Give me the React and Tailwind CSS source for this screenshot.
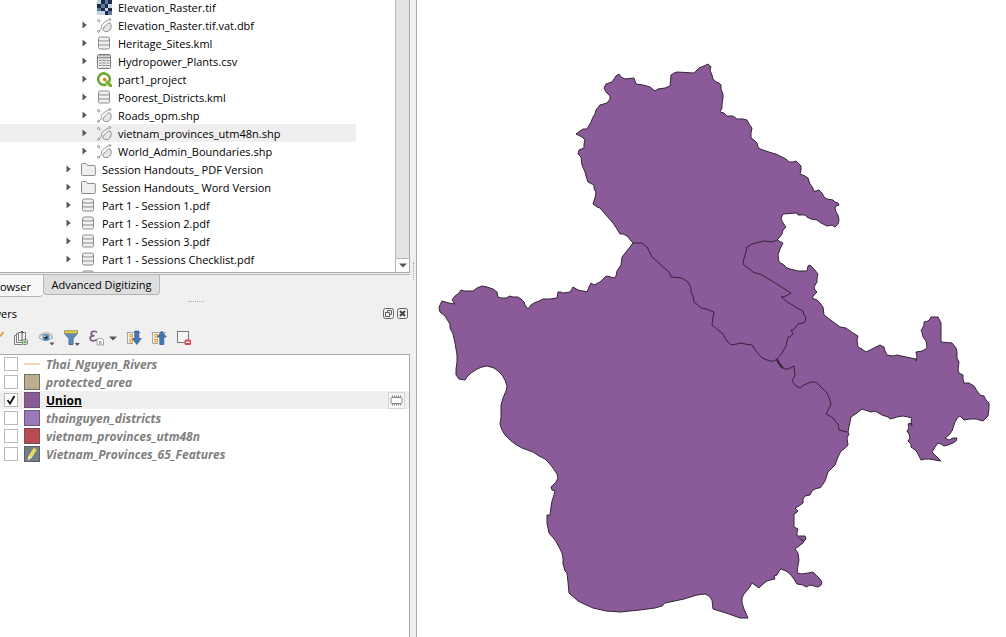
import React from 'react';

/* ---------- browser icons ---------- */

function RasterIcon() {
  const dark = [[4, 0], [12, 0], [0, 4], [8, 4], [4, 8], [12, 8], [8, 12]];
  const mid = [[8, 0], [4, 4], [0, 8], [12, 12]];
  return (
    <svg viewBox="0 0 16 16" className="size-[15px] shrink-0" shapeRendering="crispEdges" aria-hidden="true">
      <rect width="16" height="16" fill="#c3d3e6" />
      {dark.map(([x, y]) => <rect key={`${x}-${y}`} x={x} y={y} width="4" height="4" fill="#1d2b45" />)}
      {mid.map(([x, y]) => <rect key={`${x}-${y}`} x={x} y={y} width="4" height="4" fill="#5b7ba5" />)}
    </svg>
  );
}

function VectorIcon() {
  return (
    <svg viewBox="0 0 15 15" className="size-[15px] shrink-0" fill="none" stroke="#8f8f8f" aria-hidden="true">
      <path d="M2 13C5.500 11.500 3.500 7.500 6 5.500S9 3.500 11.500 1.800" />
      <path d="M2 3L5 3.500M2 3L3 6" stroke="#bbb" strokeDasharray="1.500 1" />
      <circle cx="1.500" cy="2.500" r="1" fill="#fff" />
      <circle cx="1.500" cy="13.300" r="1" fill="#fff" />
      <circle cx="12.800" cy="1.500" r="1" fill="#fff" />
      <path d="M6 11.500C6 9 7.800 8.800 9 7.500S11.500 4 13 5s1.500 4 .5 6-3 2.800-5 2.500S6 12.500 6 11.500Z" fill="#e6e6e6" />
    </svg>
  );
}

function DatabaseIcon() {
  return (
    <svg viewBox="0 0 15 15" className="size-[15px] shrink-0" fill="#f1f1f1" stroke="#8b8b8b" aria-hidden="true">
      <path d="M1.500 3v8.500q0 1.500 1.500 1.500h8q1.500 0 1.500-1.500V3" />
      <rect x="1.500" y="1" width="11" height="4" rx="2" />
      <path d="M1.500 7.500q0 1.500 1.500 1.500h8q1.500 0 1.500-1.500" fill="none" />
    </svg>
  );
}

function TableIcon() {
  return (
    <svg viewBox="0 0 15 15" className="size-[15px] shrink-0" aria-hidden="true">
      <rect x=".5" y=".5" width="13" height="14" rx="1" fill="#f4f4f4" stroke="#777" />
      <path d="M1 3h12v1.500H1z" fill="#999" />
      <path d="M2 6.500h2.500M6 6.500h2.500M10 6.500h2.500M2 9h2.500M6 9h2.500M10 9h2.500M2 11.500h2.500M6 11.500h2.500M10 11.500h2.500M2 1.800h2.500M6 1.800h2.500M10 1.800h2.500" stroke="#7c7c7c" />
      <path d="M5.200 1v13M9.200 1v13" stroke="#aaa" strokeWidth=".6" />
    </svg>
  );
}

function ProjectIcon() {
  return (
    <svg viewBox="0 0 15 15" className="size-[15px] shrink-0" aria-hidden="true">
      <path d="M12.300 9.500A5.800 5.800 0 1 0 9.300 12.500" fill="none" stroke="#6aa632" strokeWidth="2.600" />
      <path d="M8.500 8.500L11 8.500L15 12.500V15H12.500L8.500 11Z" fill="#7fae2c" />
      <circle cx="7.600" cy="7.600" r="1.800" fill="#ee7913" />
    </svg>
  );
}

function FolderIcon() {
  return (
    <svg viewBox="0 0 15 15" className="size-[15px] shrink-0" aria-hidden="true">
      <path d="M.5 3Q.5 1.500 1.500 1.500h3.500l1.500 2h7q.8 0 .8.800v8.400q0 .8-.8.800H1.300q-.8 0-.8-.8Z" fill="#efefef" stroke="#8c8c8c" />
    </svg>
  );
}

const icons = {
  raster: RasterIcon,
  vector: VectorIcon,
  database: DatabaseIcon,
  table: TableIcon,
  project: ProjectIcon,
  folder: FolderIcon,
};

const files = [
  { name: 'Elevation_Raster.tif', icon: 'raster', nested: true, leaf: true },
  { name: 'Elevation_Raster.tif.vat.dbf', icon: 'vector', nested: true },
  { name: 'Heritage_Sites.kml', icon: 'database', nested: true },
  { name: 'Hydropower_Plants.csv', icon: 'table', nested: true },
  { name: 'part1_project', icon: 'project', nested: true },
  { name: 'Poorest_Districts.kml', icon: 'database', nested: true },
  { name: 'Roads_opm.shp', icon: 'vector', nested: true },
  { name: 'vietnam_provinces_utm48n.shp', icon: 'vector', nested: true, selected: true },
  { name: 'World_Admin_Boundaries.shp', icon: 'vector', nested: true },
  { name: 'Session Handouts_ PDF Version', icon: 'folder' },
  { name: 'Session Handouts_ Word Version', icon: 'folder' },
  { name: 'Part 1 - Session 1.pdf', icon: 'database' },
  { name: 'Part 1 - Session 2.pdf', icon: 'database' },
  { name: 'Part 1 - Session 3.pdf', icon: 'database' },
  { name: 'Part 1 - Sessions Checklist.pdf', icon: 'database' },
];

function FileRow({ file }) {
  const Icon = icons[file.icon];
  return (
    <li
      className={`flex h-[18px] items-center gap-[6px] whitespace-nowrap ${file.nested ? 'pl-[79px]' : 'pl-[63px]'} ${
        file.selected ? 'bg-[#efefef]' : ''
      }`}
    >
      {file.leaf ? (
        <span className="w-3 shrink-0" />
      ) : (
        <button type="button" aria-label={`Expand ${file.name}`} className="flex w-3 shrink-0 pl-[3px]">
          <svg viewBox="0 0 5 8" className="h-2 w-[5px]" aria-hidden="true">
            <path d="M.5 .5L4.800 4L.5 7.500Z" fill="#5a5a5a" />
          </svg>
        </button>
      )}
      <Icon />
      <span className="pt-0.5">{file.name}</span>
    </li>
  );
}

function BrowserTree() {
  return (
    <section aria-label="Browser" className="mr-[6px] flex h-[273px] border-r border-b border-[#a9a9a9] bg-white">
      <div className="min-w-0 flex-1 overflow-hidden">
        <ul className="-mt-0.5 mr-[39px]">
          {files.map((file) => <FileRow key={file.name} file={file} />)}
          <li className="flex h-[18px] items-center pl-[81px]"><DatabaseIcon /></li>
        </ul>
      </div>
      <div className="flex w-[14px] flex-col border-l border-[#b8b8b8] bg-[#e3e3e3]">
        <div className="flex-1" />
        <button type="button" aria-label="Scroll down" className="flex h-[14px] items-center justify-center border-t border-[#b8b8b8] bg-white">
          <svg viewBox="0 0 8 5" className="h-[5px] w-2" aria-hidden="true"><path d="M0 .5h8L4 4.500Z" fill="#555" /></svg>
        </button>
      </div>
    </section>
  );
}

/* ---------- layers toolbar ---------- */

function AddGroupIcon() {
  return (
    <svg viewBox="0 0 16 16" className="size-4" fill="none" stroke="#7d7d7d" aria-hidden="true">
      <path d="M3.500 5.500h-2v9h8M5.500 3.500h-2v9h6" />
      <path d="M5.500 2.500h7v8h-7Z" fill="#f7f7f7" />
      <path d="M9 10V1M7 3l2-2 2 2" stroke="#555" />
      <rect x="9.500" y="9.500" width="5" height="5" rx="1.500" fill="#e8f4e4" stroke="#6b9a60" />
      <path d="M12 10.500v3M10.500 12h3" stroke="#55894b" />
    </svg>
  );
}

function EyeIcon() {
  return (
    <svg viewBox="0 0 17 16" className="h-4 w-[17px]" aria-hidden="true">
      <path d="M.8 7.500Q7 .8 15 7.500Q7.500 13 .8 7.500Z" fill="#fafafa" stroke="#999" />
      <path d="M1 5.500Q8 0 15 5.500" fill="none" stroke="#aaa" />
      <circle cx="8" cy="7.500" r="3.600" fill="#5b8fbd" />
      <circle cx="8" cy="7.500" r="1.700" fill="#17324d" />
      <circle cx="7" cy="6.300" r=".8" fill="#fff" />
      <path d="M11.500 12.500h5l-2.500 3Z" fill="#555" />
    </svg>
  );
}

function FilterIcon() {
  return (
    <svg viewBox="0 0 16 16" className="size-4" aria-hidden="true">
      <path d="M.5 1h13v2.500L9 8.500v6H5v-6L.5 3.500Z" fill="#6089b8" stroke="#44699a" />
      <path d="M.5 .8h13v2.400H.5Z" fill="#f2d94c" stroke="#a8983c" strokeWidth=".7" />
      <path d="M10.800 13h5l-2.500 3Z" fill="#555" />
    </svg>
  );
}

function ExpressionIcon() {
  return (
    <svg viewBox="0 0 16 16" className="size-4" fill="none" aria-hidden="true">
      <path d="M8 2.500C6.500.5 2 1 2.200 3.700c.1 1.500 1.700 2 3.300 2C3 5.700 1.200 6.500 1.200 8.300 1.200 11.300 6 11.600 8 9.300" stroke="#7a5a7e" strokeWidth="1.700" />
      <path d="M8 15v-4.500q0-2 2-2h2.500q2 0 2 2V15h-2.500v-3.500h-1.500V15Z" fill="#fff" stroke="#a0a0a0" />
    </svg>
  );
}

function TreeArrowIcon({ up }) {
  return (
    <svg viewBox="0 0 16 16" className="size-4" aria-hidden="true">
      <path d="M1.500 2v11.500M.5 2.500H15M1.500 13.500H7" stroke="#a5a5a5" fill="none" />
      <rect x="4" y="4.500" width="2.500" height="2.500" fill="#fff4dc" stroke="#e59a28" />
      <rect x="4" y="9.500" width="2.500" height="2.500" fill="#fff4dc" stroke="#e59a28" />
      {up ? (
        <path d="M8.800 14.500V7H6.500L10.800 1 15.200 7H12.800v7.500Z" fill="#4578b5" stroke="#28558c" strokeWidth=".7" />
      ) : (
        <path d="M8.800 1v7.500H6.500l4.300 6 4.400-6H12.800V1Z" fill="#4578b5" stroke="#28558c" strokeWidth=".7" />
      )}
    </svg>
  );
}

function RemoveIcon() {
  return (
    <svg viewBox="0 0 16 16" className="size-4" aria-hidden="true">
      <rect x="1.500" y="1.500" width="11" height="11" fill="#f7f7f7" stroke="#7a7a7a" />
      <rect x="8.500" y="9.500" width="6.500" height="5.500" rx="1.500" fill="#e0434e" />
      <path d="M9.800 12.300h4" stroke="#fff" strokeWidth="1.300" />
    </svg>
  );
}

function ToolButton({ label, children }) {
  return (
    <button type="button" aria-label={label} className="flex h-4 items-center">
      {children}
    </button>
  );
}

function LayersToolbar() {
  return (
    <div role="toolbar" aria-label="Layer tools" className="flex h-[32px] items-center gap-[9px]">
      <ToolButton label="Layer styling">
        <svg viewBox="0 0 4 16" className="h-4 w-1" aria-hidden="true">
          <path d="M0 6.500L3.500 2" stroke="#e09a3a" strokeWidth="1.800" />
        </svg>
      </ToolButton>
      <ToolButton label="Add group"><AddGroupIcon /></ToolButton>
      <ToolButton label="Manage map themes"><EyeIcon /></ToolButton>
      <ToolButton label="Filter legend"><FilterIcon /></ToolButton>
      <ToolButton label="Filter by expression">
        <span className="flex items-center gap-1">
          <ExpressionIcon />
          <svg viewBox="0 0 8 5" className="h-[5px] w-2" aria-hidden="true"><path d="M0 .5h8L4 4.500Z" fill="#555" /></svg>
        </span>
      </ToolButton>
      <ToolButton label="Expand all"><TreeArrowIcon /></ToolButton>
      <ToolButton label="Collapse all"><TreeArrowIcon up /></ToolButton>
      <ToolButton label="Remove layer"><RemoveIcon /></ToolButton>
    </div>
  );
}

/* ---------- layers ---------- */

const layers = [
  { name: 'Thai_Nguyen_Rivers', line: true },
  { name: 'protected_area', swatch: 'bg-[#bdae90]' },
  { name: 'Union', swatch: 'bg-[#8b5a98]', active: true },
  { name: 'thainguyen_districts', swatch: 'bg-[#9a7ab8]' },
  { name: 'vietnam_provinces_utm48n', swatch: 'bg-[#b94a4e]' },
  { name: 'Vietnam_Provinces_65_Features', swatch: 'bg-[#718087]', editing: true },
];

function LayerRow({ layer }) {
  return (
    <li className={`flex h-[18px] items-center pr-1 pl-1 ${layer.active ? 'bg-[#efefef]' : ''}`}>
      <label className="flex flex-1 items-center whitespace-nowrap">
        <span className="relative mr-[6px] flex">
          <input
            type="checkbox"
            defaultChecked={layer.active}
            className="peer size-[14px] appearance-none border border-[#b9b9b9] bg-white"
          />
          <svg viewBox="0 0 14 14" className="pointer-events-none absolute inset-0 hidden size-[14px] peer-checked:block" aria-hidden="true">
            <path d="M3.500 7L6 10.500L10.500 3" fill="none" stroke="#111" strokeWidth="1.800" />
          </svg>
        </span>
        {layer.line ? (
          <span className="mr-[6px] flex h-4 w-4 items-center"><span className="h-0.5 w-full bg-[#efdcae]" /></span>
        ) : (
          <span className={`mr-[6px] size-4 border border-[#55505a]/70 ${layer.swatch}`}>
            {layer.editing && (
              <svg viewBox="0 0 14 14" className="size-[14px]" aria-hidden="true">
                <path d="M3 13L4 9L9 1L11.500 2.500L6.500 10.500Z" fill="#f1dc3e" stroke="#f6f0b8" strokeWidth=".6" />
                <path d="M3 13L4 9L6.500 10.500Z" fill="#f7eed2" />
                <path d="M9 1L11.500 2.500" stroke="#b9a53a" />
              </svg>
            )}
          </span>
        )}
        <span className={`pt-0.5 text-[12px] leading-4 font-bold ${layer.active ? 'text-black underline' : 'text-[#808080] italic'}`}>
          {layer.name}
        </span>
      </label>
      {layer.active && (
        <button type="button" aria-label="Temporary scratch layer" className="flex size-[17px] items-center justify-center border border-[#d5d5d5] bg-[#f6f6f6]">
          <svg viewBox="0 0 13 11" className="h-[11px] w-[13px]" fill="none" stroke="#858585" aria-hidden="true">
            <rect x="1" y="2.500" width="11" height="6" rx="1" fill="#fff" />
            <path d="M2.500 .5v2M4.500 .5v2M6.500 .5v2M8.500 .5v2M10.500 .5v2M2.500 8.500v2M4.500 8.500v2M6.500 8.500v2M8.500 8.500v2M10.500 8.500v2" />
          </svg>
        </button>
      )}
    </li>
  );
}

function LayersPanel() {
  return (
    <section aria-label="Layers" className="flex min-h-0 flex-1 flex-col">
      <div className="mr-[8px] flex h-[18px] items-center justify-between">
        <h2 className="flex w-[17px] justify-end overflow-hidden pt-0.5">Layers</h2>
        <div className="flex gap-[3px]">
          <button type="button" aria-label="Float panel">
            <svg viewBox="0 0 11 11" className="size-[11px]" fill="none" stroke="#666" aria-hidden="true">
              <rect x=".5" y=".5" width="10" height="10" rx="2" />
              <path d="M4.500 4.500v-2h4v4h-2" />
              <rect x="2.500" y="4.500" width="4" height="4" />
            </svg>
          </button>
          <button type="button" aria-label="Close panel">
            <svg viewBox="0 0 11 11" className="size-[11px]" fill="none" stroke="#666" aria-hidden="true">
              <rect x=".5" y=".5" width="10" height="10" rx="2" />
              <path d="M3 3l5 5M8 3L3 8" stroke="#444" strokeWidth="2" />
            </svg>
          </button>
        </div>
      </div>
      <LayersToolbar />
      <ul className="mr-[6px] flex-1 border-t border-r border-[#a9a9a9] bg-white">
        {layers.map((layer) => <LayerRow key={layer.name} layer={layer} />)}
      </ul>
    </section>
  );
}

/* ---------- map ---------- */

const outline =
  'M708 64L711 67L710 70L712 75L713 79L716 82L719 83L721 85L721 89L723 94L723 98L722 104L722 108L720 112L724 113L727 116L733 116L737 119L743 119L747 120L749 124L752 128L751 133L751 138L754 140L757 143L758 147L760 149L766 151L772 153L776 154L780 156L784 158L786 159L789 162L793 162L796 161L798 163L801 166L801 170L800 174L805 176L808 178L810 184L813 188L813 191L816 191L819 190L822 193L824 197L827 199L833 200L835 202L838 203L839 205L836 206L835 208L836 212L838 215L839 220L838 224L835 227L832 225L827 226L821 223L817 220L811 219L807 217L805 215L798 215L797 213L783 214L782 216L781 219L783 223L786 227L783 230L782 234L779 238L777 240L783 243L780 249L778 255L779 262L784 265L787 268L790 269L798 271L807 271L808 266L810 265L814 269L818 274L817 278L817 282L814 287L815 290L817 292L814 295L812 298L817 300L820 303L823 307L824 315L832 321L840 327L846 328L853 333L858 336L857 340L858 347L862 349L866 352L870 350L880 345L884 347L885 351L887 355L893 356L897 355L906 357L916 359L916 361L917 357L916 352L922 351L926 349L927 347L926 341L923 337L922 332L921 331L924 325L924 322L928 321L930 319L931 317L938 317L941 323L941 330L941 342L952 343L956 348L957 352L957 358L959 362L958 370L959 373L963 375L963 379L964 383L969 383L974 386L977 391L980 395L984 396L986 400L989 403L989 408L988 416L983 421L976 419L970 419L964 420L960 416L958 417L955 422L952 431L949 435L945 438L949 440L953 438L957 438L956 441L953 443L948 445L944 446L941 444L938 443L935 447L932 452L937 457L941 461L935 460L929 459L925 459L921 460L919 456L917 452L915 450L911 447L911 444L908 441L910 438L909 434L907 431L909 428L908 424L910 423L912 426L911 421L912 418L908 417L903 416L897 417L894 418L890 419L888 417L882 415L875 411L871 412L862 409L857 413L851 417L850 422L849 427L848 432L849 434L847 438L848 445L844 449L841 451L838 457L835 465L831 469L828 472L825 481L823 484L820 488L818 488L815 489L812 491L810 495L805 496L803 499L803 503L799 506L795 508L798 511L796 513L794 514L794 520L794 527L798 529L797 532L797 536L801 536L805 536L806 539L804 541L803 543L799 546L795 549L798 553L799 560L798 565L797 573L802 574L808 573L813 572L816 575L819 578L822 582L821 585L818 587L814 586L810 585L806 587L803 585L797 584L794 579L790 574L786 571L781 569L779 571L777 575L774 576L775 579L770 580L767 581L763 584L759 588L752 583L749 588L744 594L742 598L742 603L744 609L748 618L740 618L726 613L713 609L712 600L709 596L705 594L697 595L684 599L665 603L662 606L655 608L640 610L620 612L606 611L593 608L584 604L578 601L569 593L568 582L567 573L565 571L564 567L563 564L563 558L562 553L559 547L555 540L549 533L547 523L547 515H550L551 507L552 501L554 495L555 491L552 490L551 487L553 485L556 482L558 478L557 474L553 468L549 463L545 459L539 456L533 452L522 448L515 444L510 440L505 435L502 430L500 424L501 418L501 405L503 398L506 391L507 386L505 380L502 375L498 371L494 368L487 366L482 367L477 369L471 373L467 377L465 380L459 379L456 375L456 369L457 362L457 355L455 343L453 334L450 328L450 324L448 321L445 316L440 312L439 308L440 305L442 301L449 303L455 304L452 300L455 296L459 293L461 290L464 291L473 291L477 288L482 286L487 287L493 289L497 292L498 297L501 298L506 298L510 296L513 297L518 297L521 299L524 302L525 305L528 309L531 305L534 303L539 301L543 299L550 299L557 298L558 292L561 292L563 293L570 292L572 289L573 287L578 290L583 291L587 292L589 287L591 283L594 285L600 282L602 280L605 277L607 276L614 278L616 276L617 271L621 265L622 257L626 252L630 247L633 243L627 236L623 234L620 234L617 229L613 223L606 215L600 208L597 207L593 204L595 198L596 193L594 188L594 185L588 182L586 176L585 172L582 165L581 157L578 154L579 150L584 148L584 144L585 140L582 137L576 134L580 131L583 129L587 129L591 122L593 117L595 114L596 110L600 105L607 103L610 99L610 96L606 92L604 88L606 84L612 82L616 76L619 74L621 77L625 79L634 78L636 84L643 85L650 87L655 91L658 89L665 88L670 86L671 75L674 73L677 72L694 73L699 68L704 66Z';

const southBorder =
  'M633 243L642 243L647 247L652 257L660 264L669 272L671 277L682 278L688 282L691 288L691 292L693 296L694 302L699 306L701 308L706 309L714 312L713 317L712 325L718 330L723 334L726 340L731 345L742 343L745 344L752 345L756 351L762 358L770 361L774 361L777 359L780 364L784 369L788 369L794 366L795 375L792 381L796 386L800 388L804 385L811 382L816 382L821 387L827 393L830 400L831 405L828 410L826 414L830 416L833 418L836 422L838 424L839 430L847 432';

const eastBorder =
  'M777 240L772 242L764 241L752 244L747 247L746 252L744 258L743 264L753 272L762 275L772 281L783 288L791 293L786 296L781 297L789 303L797 308L803 311L804 315L806 317L805 322L803 323L798 324L795 328L793 330L791 330L793 334L790 337L788 337L786 346L782 353L777 359';

function MapCanvas() {
  return (
    <main className="min-w-0 flex-1 bg-white">
      <svg viewBox="417 0 589 637" className="size-full" role="img" aria-label="Union layer map">
        <g stroke="#352539" strokeWidth="1" strokeLinejoin="round">
          <path d={outline} fill="#8b5a98" />
          <path d={southBorder} fill="none" />
          <path d={eastBorder} fill="none" />
          <path d="M777 360L780 365L783 368" fill="none" strokeWidth="2" />
          <path d="M799 538L802 540L804 541" fill="none" />
        </g>
      </svg>
    </main>
  );
}

export default function App() {
  return (
    <div className="flex h-screen overflow-hidden bg-[#f0f0f0] font-['Open_Sans','Noto_Sans',sans-serif] text-[11px] leading-4 text-black">
      <aside className="relative flex w-[417px] shrink-0 flex-col border-r border-[#a9a9a9]">
        <BrowserTree />
        <div role="tablist" className="mt-px mr-[6px] flex h-[24px] items-start border-t border-[#b4b4b4]">
          <button type="button" role="tab" aria-selected="true" className="flex h-[22px] w-[43px] items-center justify-end overflow-hidden rounded-br-sm border-b border-[#b4b4b4] bg-[#f7f7f7] pt-0.5 pr-3">
            Browser
          </button>
          <button type="button" role="tab" aria-selected="false" className="flex h-[20px] w-[117px] items-center justify-center rounded-b-sm border border-t-0 border-[#b4b4b4] bg-[#dedede] whitespace-nowrap">
            Advanced Digitizing
          </button>
        </div>
        <div className="flex h-[6px] items-center justify-center pr-6">
          <span className="w-4 border-t border-dotted border-[#aaa]" />
        </div>
        <LayersPanel />
        <span className="absolute top-[262px] right-[2px] h-[18px] border-l border-dotted border-[#aaa]" />
      </aside>
      <MapCanvas />
    </div>
  );
}
